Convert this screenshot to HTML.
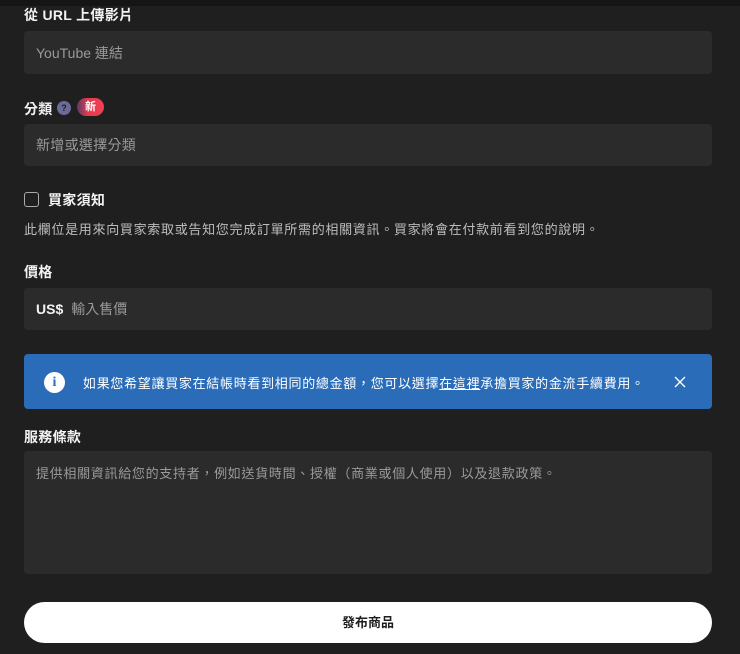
<!DOCTYPE html>
<html><head><meta charset="utf-8"><style>
*{margin:0;padding:0;box-sizing:border-box}
body{width:740px;height:654px;background:#1f1f1f;font-family:"Liberation Sans","Noto Sans CJK TC",sans-serif;color:#fff;position:relative;overflow:hidden}
.top{position:absolute;left:0;top:0;width:740px;height:6px;background:#151515}
.a{position:absolute}
.lbl{font-size:14px;font-weight:bold;color:#f2f2f2;letter-spacing:0.3px}
.inp{position:absolute;left:24px;width:688px;background:#2b2b2b;border-radius:4px;color:#9a9a9a;font-size:14px;padding-left:12px;display:flex;align-items:center}
</style></head><body>
<div class="top"></div>
<div class="a lbl" style="left:24px;top:5px">從 URL 上傳影片</div>
<div class="inp" style="top:31px;height:43px">YouTube 連結</div>
<div class="a lbl" style="left:24px;top:99px">分類</div>
<div class="a" style="left:57px;top:101px;width:14px;height:14px;border-radius:50%;background:#6b6b9a;font-size:9px;font-weight:bold;text-align:center;line-height:14px;color:#1f1f1f">?</div>
<div class="a" style="left:77px;top:98px;width:27px;height:18px;border-radius:9px;background:linear-gradient(90deg,#5a3a6a,#e53a4d 40%,#f04055);font-size:11px;font-weight:bold;text-align:center;line-height:18px">新</div>
<div class="inp" style="top:124px;height:42px;letter-spacing:0.3px">新增或選擇分類</div>
<div class="a" style="left:24px;top:192px;width:15px;height:15px;border:1.5px solid #aaa;border-radius:3px"></div>
<div class="a lbl" style="left:48px;top:190px">買家須知</div>
<div class="a" style="left:24px;top:219px;font-size:13px;color:#bdbdbd;letter-spacing:0.7px">此欄位是用來向買家索取或告知您完成訂單所需的相關資訊。買家將會在付款前看到您的說明。</div>
<div class="a lbl" style="left:24px;top:262px">價格</div>
<div class="inp" style="top:288px;height:42px"><b style="color:#f2f2f2;margin-right:8px">US$</b>輸入售價</div>
<div class="a" style="left:24px;top:354px;width:688px;height:55px;background:#2b6cb8;border-radius:4px"></div>
<div class="a" style="left:44px;top:372px;width:21px;height:21px;border-radius:50%;background:#fff;color:#2b6cb8;font-weight:bold;font-size:14px;text-align:center;line-height:21px;font-family:'Liberation Serif',serif">i</div>
<div class="a" style="left:83px;top:373px;font-size:13px;color:#fff;letter-spacing:0.7px">如果您希望讓買家在結帳時看到相同的總金額，您可以選擇<u>在這裡</u>承擔買家的金流手續費用。</div>
<svg class="a" style="left:674px;top:376px" width="12" height="12" viewBox="0 0 12 12"><path d="M1 1L11 11M11 1L1 11" stroke="#fff" stroke-width="1.4"/></svg>
<div class="a lbl" style="left:24px;top:427px">服務條款</div>
<div class="inp" style="top:451px;height:123px;align-items:flex-start;padding-top:12px;font-size:13px;letter-spacing:0.7px">提供相關資訊給您的支持者，例如送貨時間、授權（商業或個人使用）以及退款政策。</div>
<div class="a" style="left:24px;top:602px;width:688px;height:41px;background:#fff;border-radius:21px;color:#1f1f1f;font-size:13px;font-weight:bold;text-align:center;line-height:41px">發布商品</div>
</body></html>
